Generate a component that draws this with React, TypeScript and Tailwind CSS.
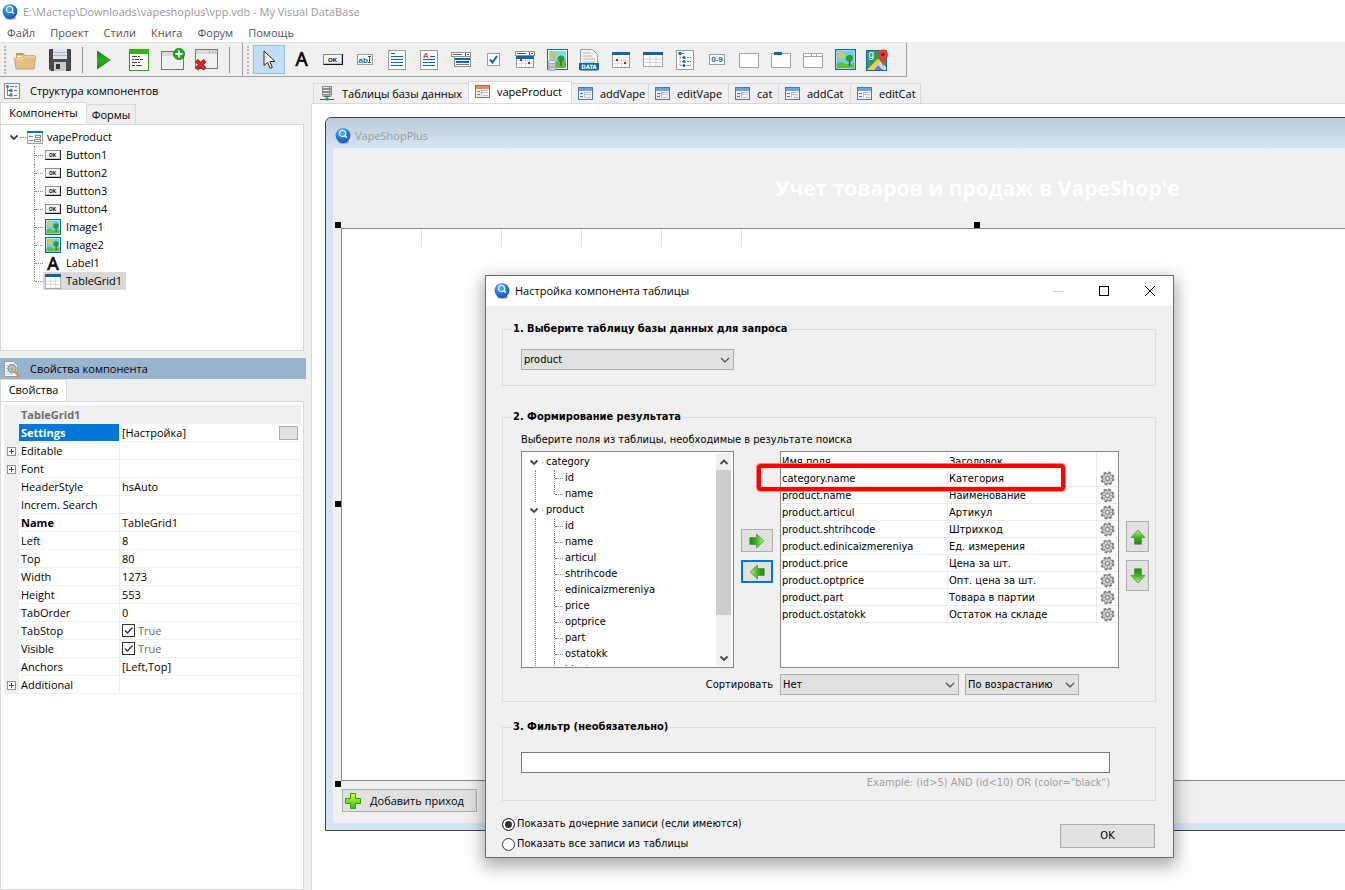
import type { ReactNode } from "react";

const inset = "col-start-1 row-start-1";

function AppIcon() {
  return (
    <svg width="16" height="16" viewBox="0 0 16 16" className="shrink-0">
      <defs>
        <radialGradient id="ball" cx="0.4" cy="0.3" r="0.75">
          <stop offset="0" stopColor="#6cbcf7" />
          <stop offset="0.6" stopColor="#1f74e0" />
          <stop offset="1" stopColor="#0f4d96" />
        </radialGradient>
      </defs>
      <ellipse cx="8.5" cy="14" rx="5.5" ry="1.800" fill="#9aa3ab" />
      <circle cx="8" cy="7.600" r="7.400" fill="url(#ball)" />
      <circle cx="7.600" cy="5.400" r="3.100" fill="#4aa0f0" stroke="#e8f4ff" strokeWidth="1.200" />
      <path d="M9.800 7.600 12 9.800" stroke="#e8f4ff" strokeWidth="1.400" />
    </svg>
  );
}

function FormIcon({ color, light }: { color: string; light: string }) {
  return (
    <svg width="15" height="13" viewBox="0 0 15 13" shapeRendering="crispEdges" className="shrink-0">
      <rect x="0.5" y="0.5" width="14" height="12" fill="#f4f4f4" stroke={color} />
      <rect x="1" y="1" width="13" height="3" fill={light} />
      <path d="M2 6.500h3M2 9.500h3" stroke={color} />
      <path d="M7 5.500h6M7 7.500h6M6 8.500h1M8 10.500h5M6.500 5v6" stroke="#bdbdbd" />
    </svg>
  );
}

function TreeFormIcon() {
  return (
    <svg width="16" height="13" viewBox="0 0 16 13" shapeRendering="crispEdges" className="shrink-0">
      <rect x="0.5" y="0.5" width="15" height="12" fill="#f2f2f2" stroke="#a0a0a0" />
      <rect width="16" height="2" fill="#0a79b8" />
      <path d="M2 5.500h4M2 9.500h4" stroke="#8a8a8a" />
      <path d="M8.500 4.500h5v2h-5zM7.500 8.500h6v2h-6z" fill="#fff" stroke="#8a8a8a" />
    </svg>
  );
}

function OkIcon({ w, h }: { w: number; h: number }) {
  return (
    <svg width={w} height={h} viewBox="0 0 20 11" preserveAspectRatio="none" className="shrink-0">
      <rect width="20" height="11" fill="#8a8a8a" />
      <path d="M20 0v11H0l1-1h18V0z" fill="#111" />
      <rect x="1" y="1" width="17.500" height="8.500" fill="#f3f3f3" />
      <text x="9.500" y="7.500" textAnchor="middle" fontSize="6" fontWeight="bold" fontFamily="Liberation Sans, sans-serif">OK</text>
    </svg>
  );
}

function PictureIcon({ size }: { size: number }) {
  return (
    <svg width={size} height={size} viewBox="0 0 16 16" className="shrink-0">
      <rect x="0.500" y="0.500" width="15" height="15" fill="#fff" stroke="#0b67b2" />
      <rect x="1.500" y="1.500" width="13" height="13" fill="#63d6f4" />
      <path d="M1.500 11q3-2 6 0t7-1v4.500h-13z" fill="#5bc035" />
      <circle cx="5" cy="5" r="2.400" fill="#fbc02d" />
      <circle cx="11" cy="7" r="2.700" fill="#2f9e2b" />
      <path d="M10.500 8.500h1.200V13h-1.200z" fill="#8a4b22" />
    </svg>
  );
}

function LetterA({ size }: { size: number }) {
  return (
    <svg width={size} height={size} viewBox="0 0 16 16" className="shrink-0 overflow-visible">
      <text x="8" y="14.500" textAnchor="middle" fontSize="18" stroke="#000" strokeWidth="0.600" fontFamily="Noto Sans, sans-serif">A</text>
    </svg>
  );
}

function GridIcon({ w, h }: { w: number; h: number }) {
  return (
    <svg width={w} height={h} viewBox="0 0 20 15" preserveAspectRatio="none" className="shrink-0">
      <rect x="0.500" y="0.500" width="19" height="14" fill="#fff" stroke="#a5a5a5" />
      <rect width="20" height="3" fill="#0a62ab" />
      <path d="M1 7h18M1 10.500h18M7 4v10M13 4v10" stroke="#d3d3d3" strokeWidth="0.900" />
    </svg>
  );
}

function StructureIcon() {
  return (
    <svg width="16" height="16" viewBox="0 0 16 16" className="shrink-0">
      <rect x="0.500" y="0.500" width="15" height="15" fill="#f7f7f7" stroke="#8d8d8d" />
      <path d="M3.500 4v8.500H7M3.500 7.500H7" fill="none" stroke="#777" />
      <circle cx="3.500" cy="3.500" r="1.500" fill="#3579b8" />
      <circle cx="7" cy="7.500" r="1.700" fill="#3579b8" />
      <circle cx="7" cy="12" r="1.700" fill="#3579b8" />
      <path d="M6 3.500h4M11 3.500h2M10 7.500h3M10 12.500h3" stroke="#777" />
    </svg>
  );
}

function InspectIcon() {
  return (
    <svg width="16" height="16" viewBox="0 0 16 16" className="shrink-0">
      <path d="M0.500 0.500h9l4 4v11h-13z" fill="#fafafa" stroke="#9b9b9b" />
      <path d="M2 4.500h2M2 7.500h2M2 10.500h2M2 13h7" stroke="#c0c0c0" />
      <circle cx="8" cy="7.500" r="4" fill="#8fd2ee" stroke="#8e979e" strokeWidth="1.400" />
      <path d="M6 8.500l2.500-3 1.500 2-2 2.500z" fill="#f29b38" />
      <path d="M11 10.500l3.500 4" stroke="#d79b47" strokeWidth="2.800" strokeLinecap="round" />
    </svg>
  );
}

function ServerIcon() {
  return (
    <svg width="14" height="15" viewBox="0 0 14 15" className="shrink-0">
      {[0, 3, 6].map((y) => (
        <g key={y}>
          <rect x="2" y={y} width="10" height="3" fill="#8a8a8a" />
          <path d={`M3 ${y + 1.5}h6`} stroke="#ececec" />
          <path d={`M10 ${y + 1.5}h1`} stroke="#d0f0d0" />
        </g>
      ))}
      <path d="M2 9.500h10L10 11H4zM6.500 11h1v2h-1z" fill="#666" />
      <path d="M0 13.500h14" stroke="#555" />
      <circle cx="7" cy="13" r="1.800" fill="#31ab31" />
    </svg>
  );
}

function Chevron({ up = false }: { up?: boolean }) {
  return (
    <svg width="10" height="10" viewBox="0 0 10 10" className="shrink-0">
      <path d={up ? "M1.500 7 5 3.500 8.500 7" : "M1.500 3.500 5 7 8.500 3.500"} fill="none" stroke="#444" strokeWidth="1.800" />
    </svg>
  );
}

function Gear() {
  return (
    <svg width="15" height="15" viewBox="0 0 15 15" className="mx-auto block">
      <circle cx="7.500" cy="7.500" r="6" fill="#d4d4d4" stroke="#7c7c7c" strokeWidth="2" strokeDasharray="2.700 2.012" />
      <circle cx="7.500" cy="7.500" r="5.200" fill="#d2d2d4" stroke="#8f8f8f" strokeWidth="0.900" />
      <path d="M7.500 2.500v10M2.500 7.500h10M4 4l7 7M11 4l-7 7" stroke="#9c9c9c" strokeWidth="0.800" />
      <circle cx="7.500" cy="7.500" r="2" fill="#f4f4f4" stroke="#777" />
    </svg>
  );
}

function Arrow({ dir }: { dir: "right" | "left" | "up" | "down" }) {
  const turn = { right: 0, down: 90, left: 180, up: 270 }[dir];
  return (
    <svg width="16" height="16" viewBox="0 0 16 16" className="mx-auto block">
      <defs>
        <linearGradient id={`green-${dir}`} x1="0" x2="1">
          <stop offset="0" stopColor="#138a10" />
          <stop offset="0.45" stopColor="#37b51f" />
          <stop offset="1" stopColor="#c6ef8c" />
        </linearGradient>
      </defs>
      <g transform={`rotate(${turn} 8 8)`}>
        <path d="M0.800 4.500H7.500V1L15 8l-7.500 7v-3.500H0.800z" fill={`url(#green-${dir})`} stroke="#5c8a50" strokeWidth="0.800" />
      </g>
    </svg>
  );
}

function FolderIcon() {
  return (
    <svg width="22" height="20" viewBox="0 0 22 20">
      <path d="M2 3h7l2 2h8v7H2z" fill="#c89a52" />
      <path d="M3 5.500h15V9H3z" fill="#f4f4f4" />
      <path d="M0.500 8h7l2-2h12l-1.500 13H2z" fill="#e3c08a" stroke="#c79d58" />
      <path d="M1 8.800h7l2-2h11" fill="none" stroke="#f6e0b4" />
    </svg>
  );
}

function SaveIcon() {
  return (
    <svg width="22" height="22" viewBox="0 0 22 22">
      <path d="M0.500 0.500h21v21H2l-1.500-1.500z" fill="#4a4a4e" stroke="#3a3a3d" />
      <rect x="4" y="0" width="14" height="10" fill="#dfe5ec" />
      <path d="M4 3.500h14M4 6.500h14" stroke="#a8b6c6" />
      <rect x="5" y="13" width="12" height="9" fill="#c9c9cc" />
      <rect x="7" y="15" width="4" height="5" fill="#333" />
    </svg>
  );
}

function RunIcon() {
  return (
    <svg width="14" height="20" viewBox="0 0 14 20">
      <defs>
        <linearGradient id="run" x2="0" y2="1">
          <stop offset="0" stopColor="#0a7a0c" />
          <stop offset="0.500" stopColor="#2fae2b" />
          <stop offset="1" stopColor="#138712" />
        </linearGradient>
      </defs>
      <path d="M0 0.500 14 10 0 19.500z" fill="url(#run)" />
    </svg>
  );
}

function ScriptIcon() {
  return (
    <svg width="20" height="22" viewBox="0 0 20 22" shapeRendering="crispEdges">
      <rect x="0.500" y="0.500" width="19" height="21" fill="#fff" stroke="#2ea112" />
      <rect width="20" height="5" fill="#37b018" />
      <path d="M3 7.500h5M9 7.500h2M3 10.500h2M6 10.500h4M11 10.500h3M3 13.500h5M9 13.500h2M3 16.500h3M7 16.500h6" stroke="#444" />
    </svg>
  );
}

function AddFormIcon() {
  return (
    <svg width="24" height="23" viewBox="0 0 24 23">
      <rect x="0.500" y="3.500" width="22" height="18" fill="#f0f0f0" stroke="#777" />
      <rect x="1" y="4" width="21" height="4" fill="#d9d9d9" />
      <circle cx="18" cy="6" r="5.700" fill="#2aa51c" stroke="#187a10" strokeWidth="0.600" />
      <path d="M18 2.500v7M14.500 6h7" stroke="#fff" strokeWidth="2" />
    </svg>
  );
}

function RemoveFormIcon() {
  return (
    <svg width="24" height="23" viewBox="0 0 24 23">
      <rect x="0.500" y="1.500" width="22" height="19" fill="#f0f0f0" stroke="#777" />
      <rect x="1" y="2" width="21" height="4" fill="#d9d9d9" />
      <path d="M14 4h1M17 4h1M20 4h1" stroke="#888" />
      <path d="M1.500 12.500l8.500 8.500M10 12.500L1.500 21" stroke="#8f1111" strokeWidth="4" />
      <path d="M1.500 12.500l8.500 8.500M10 12.500L1.500 21" stroke="#d92a22" strokeWidth="2.600" />
    </svg>
  );
}

function CursorIcon() {
  return (
    <svg width="13" height="20" viewBox="0 0 13 20">
      <path d="M1 1v14.500l3.500-3.200 2.600 6 2.300-1-2.600-5.800H12z" fill="#fff" stroke="#222" />
    </svg>
  );
}

function EditIcon() {
  return (
    <svg width="16" height="11" viewBox="0 0 16 11">
      <rect x="0.500" y="0.500" width="15" height="10" fill="#fff" stroke="#9b9b9b" />
      <text x="1.500" y="8.500" fontSize="8" fontWeight="bold" fill="#0b67b2" fontFamily="Liberation Sans, sans-serif">ab</text>
      <path d="M11 2.500h3M11 8.500h3M12.500 2.500v6" stroke="#555" />
    </svg>
  );
}

function MemoIcon({ rich = false }: { rich?: boolean }) {
  return (
    <svg width="18" height="20" viewBox="0 0 18 20" shapeRendering="crispEdges">
      <rect x="0.500" y="0.500" width="17" height="19" fill="#fff" stroke="#9b9b9b" />
      {rich ? (
        <>
          <text x="3" y="8" fontSize="8" fontWeight="bold" fill="#e2453a" fontFamily="Liberation Sans, sans-serif">A</text>
          <path d="M10 6.500h5M3 9.500h12M3 12.500h12M3 15.500h12" stroke="#0b67b2" />
        </>
      ) : (
        <path d="M3 3.500h4M3 6.500h12M3 9.500h12M3 12.500h12M3 15.500h12" stroke="#0b67b2" />
      )}
    </svg>
  );
}

function ComboIcon() {
  return (
    <svg width="20" height="15" viewBox="0 0 20 15" shapeRendering="crispEdges">
      <rect x="0.500" y="0.500" width="19" height="4" fill="#fff" stroke="#8f8f8f" />
      <path d="M2 2.500h9M14.500 1v3M16 2.500h2" stroke="#555" />
      <rect x="3.500" y="4.500" width="16" height="10" fill="#fff" stroke="#8f8f8f" />
      <path d="M5 12.500h13" stroke="#777" />
      <path d="M4 7h15M5 10h13" stroke="#0b67b2" strokeWidth="2" />
    </svg>
  );
}

function CheckIcon() {
  return (
    <svg width="13" height="13" viewBox="0 0 13 13">
      <rect x="0.500" y="0.500" width="12" height="12" fill="#fff" stroke="#9b9b9b" />
      <path d="M3 6.500l2.500 3L10 3" fill="none" stroke="#0b67b2" strokeWidth="2" />
    </svg>
  );
}

function CalendarIcon({ combo = false }: { combo?: boolean }) {
  return (
    <svg width="20" height="17" viewBox="0 0 20 17" shapeRendering="crispEdges">
      <rect x="1.500" y="1.500" width="17" height="15" fill="#fff" stroke="#9b9b9b" />
      <rect x="1" y={combo ? 5 : 1} width="18" height="3" fill="#0b67b2" />
      {combo && <path d="M0.500 0.500h19v4h-19z" fill="#fff" stroke="#8f8f8f" />}
      {combo && <path d="M2 2.500h9M14.500 1v3M16 2.500h2" stroke="#555" />}
      <path d="M3 9.500h14M3 12.500h14M6.500 8v8M10.500 8v8M14.500 8v8" stroke="#dcdcdc" />
      <path d="M5 8h2v2H5zM13 11h2v2h-2z" fill="#c01818" />
    </svg>
  );
}

function DbImageIcon() {
  return (
    <svg width="21" height="22" viewBox="0 0 21 22">
      <rect x="0.500" y="0.500" width="20" height="20" fill="#fff" stroke="#0b67b2" />
      <rect x="2" y="2" width="17" height="17" fill="#7adcf4" />
      <path d="M2 14q5-3 9-1t8-1v7H2z" fill="#5bc035" />
      <circle cx="6.500" cy="6.500" r="3" fill="#fbb62d" />
      <circle cx="14" cy="10" r="3.500" fill="#2f9e2b" />
      <path d="M13.300 12h1.500v5h-1.500z" fill="#8a4b22" />
      <path d="M1 13v7c0 2.500 8 2.500 8 0v-7z" fill="#c3cad2" stroke="#7e8890" strokeWidth="0.700" />
      <ellipse cx="5" cy="13" rx="4" ry="1.700" fill="#eef1f4" stroke="#7e8890" strokeWidth="0.700" />
      <path d="M1 16.500c0 2.200 8 2.200 8 0" fill="none" stroke="#7e8890" strokeWidth="0.700" />
    </svg>
  );
}

function DataIcon() {
  return (
    <svg width="20" height="22" viewBox="0 0 20 22">
      <path d="M1.500 0.500h12l5 5v16h-17z" fill="#f3f3f3" stroke="#9b9b9b" />
      <path d="M4 4h8M4 7h9M4 10h12M4 13h12" stroke="#c9c9c9" strokeWidth="1.400" />
      <rect y="14" width="20" height="7" fill="#0b67b2" />
      <text x="10" y="20" textAnchor="middle" fontSize="6" fontWeight="bold" fill="#fff" fontFamily="DejaVu Sans Condensed, sans-serif">DATA</text>
    </svg>
  );
}

function TreeIcon() {
  return (
    <svg width="18" height="20" viewBox="0 0 18 20">
      <rect x="0.500" y="0.500" width="17" height="19" fill="#fff" stroke="#9b9b9b" />
      <path d="M4 4v11M4 7.500h4M4 11.500h4M4 15.500h4" stroke="#999" strokeDasharray="1 1" />
      <path d="M6 3.500h3M11 7.500h4M11 11.500h4M11 15.500h4" stroke="#777" strokeDasharray="2 1" />
      <circle cx="4" cy="3.500" r="1.700" fill="#0b67b2" />
      <circle cx="8" cy="7.500" r="1.500" fill="#0b67b2" />
      <circle cx="8" cy="11.500" r="1.500" fill="#0b67b2" />
      <circle cx="8" cy="15.500" r="1.500" fill="#0b67b2" />
    </svg>
  );
}

function CounterIcon() {
  return (
    <svg width="16" height="11" viewBox="0 0 16 11">
      <rect x="0.500" y="0.500" width="15" height="10" fill="#fff" stroke="#9b9b9b" />
      <text x="8" y="8" textAnchor="middle" fontSize="8" fontWeight="bold" fill="#0b67b2" fontFamily="Liberation Sans, sans-serif">0-9</text>
    </svg>
  );
}

function PanelIcon({ kind }: { kind: "plain" | "group" | "tabs" }) {
  return (
    <svg width="20" height="16" viewBox="0 0 20 16" shapeRendering="crispEdges">
      <rect x="0.500" y="1.500" width="19" height="14" fill="#fff" stroke="#a5a5a5" />
      {kind === "group" && <rect x="3" y="0" width="8" height="3" fill="#0b67b2" />}
      {kind === "tabs" && <path d="M0 4.500h20M8.500 1v3M13.500 1v3" stroke="#a5a5a5" />}
    </svg>
  );
}

function MapIcon() {
  return (
    <svg width="23" height="22" viewBox="0 0 23 22">
      <rect x="0.500" y="1.500" width="20" height="20" fill="#2f9a5b" stroke="#0b67b2" />
      <path d="M1 21 12 10l8 8v3z" fill="#d9d9d9" />
      <path d="M1 21 12 10l2.500 2.500L6 21z" fill="#fbcf2f" />
      <path d="M12 16l5 5h-9z" fill="#4a86e8" />
      <text x="2.500" y="9" fontSize="10" fill="#fff" fontFamily="Liberation Sans, sans-serif">g</text>
      <path d="M17 0.500a5 5 0 0 1 5 5c0 4-4.300 6-5 12-.700-6-5-8-5-12a5 5 0 0 1 5-5z" fill="#e0412f" />
      <circle cx="17" cy="5.500" r="1.700" fill="#7a1b12" />
    </svg>
  );
}

function PlusIcon() {
  return (
    <svg width="16" height="16" viewBox="0 0 16 16" className="shrink-0">
      <defs>
        <linearGradient id="plus" x2="0" y2="1">
          <stop offset="0" stopColor="#f4f81a" />
          <stop offset="1" stopColor="#1fc21f" />
        </linearGradient>
      </defs>
      <path d="M5.500 0.500h5v5h5v5h-5v5h-5v-5h-5v-5h5z" fill="url(#plus)" stroke="#17a817" />
    </svg>
  );
}

function Tool({ label, active = false, children }: { label: string; active?: boolean; children: ReactNode }) {
  return (
    <button
      type="button"
      aria-label={label}
      className={
        active
          ? "flex h-[29px] w-8 items-center justify-center border border-[#90c0e8] bg-[#c3ddf3]"
          : "flex h-[29px] w-8 items-center justify-center"
      }
    >
      {children}
    </button>
  );
}

function Grip() {
  return <div className="h-7 w-0 border-l-2 border-dotted border-[#b8b8b8]" />;
}

const menu = ["Файл", "Проект", "Стили", "Книга", "Форум", "Помощь"];

const components: { name: string; icon: ReactNode }[] = [
  { name: "Button1", icon: <OkIcon w={16} h={10} /> },
  { name: "Button2", icon: <OkIcon w={16} h={10} /> },
  { name: "Button3", icon: <OkIcon w={16} h={10} /> },
  { name: "Button4", icon: <OkIcon w={16} h={10} /> },
  { name: "Image1", icon: <PictureIcon size={16} /> },
  { name: "Image2", icon: <PictureIcon size={16} /> },
  { name: "Label1", icon: <LetterA size={16} /> },
  { name: "TableGrid1", icon: <GridIcon w={16} h={15} /> },
];

const properties: { name: string; value?: string; expand?: boolean; check?: boolean; bold?: boolean }[] = [
  { name: "Settings", value: "[Настройка]" },
  { name: "Editable", expand: true },
  { name: "Font", expand: true },
  { name: "HeaderStyle", value: "hsAuto" },
  { name: "Increm. Search" },
  { name: "Name", value: "TableGrid1", bold: true },
  { name: "Left", value: "8" },
  { name: "Top", value: "80" },
  { name: "Width", value: "1273" },
  { name: "Height", value: "553" },
  { name: "TabOrder", value: "0" },
  { name: "TabStop", value: "True", check: true },
  { name: "Visible", value: "True", check: true },
  { name: "Anchors", value: "[Left,Top]" },
  { name: "Additional", expand: true },
];

const formTabs = [
  { name: "addVape", width: "w-[77px]" },
  { name: "editVape", width: "w-[80px]" },
  { name: "cat", width: "w-[50px]" },
  { name: "addCat", width: "w-[72px]" },
  { name: "editCat", width: "w-[70px]" },
];

const tables = [
  { name: "category", fields: ["id", "name"] },
  {
    name: "product",
    fields: ["id", "name", "articul", "shtrihcode", "edinicaizmereniya", "price", "optprice", "part", "ostatokk", "idcategory"],
  },
];

const columns = [
  ["category.name", "Категория"],
  ["product.name", "Наименование"],
  ["product.articul", "Артикул"],
  ["product.shtrihcode", "Штрихкод"],
  ["product.edinicaizmereniya", "Ед. измерения"],
  ["product.price", "Цена за шт."],
  ["product.optprice", "Опт. цена за шт."],
  ["product.part", "Товара в партии"],
  ["product.ostatokk", "Остаток на складе"],
];

function Toolbars() {
  return (
    <div className="flex">
      <div className="flex h-[35px] w-[243px] items-center border-t border-r border-b border-t-[#e3e3e3] border-r-[#a0a0a0] border-b-[#a0a0a0] pl-1">
        <Grip />
        <div className="flex flex-1 items-center pl-1.5">
          <button type="button" aria-label="Открыть" className="flex w-[25px] justify-center"><FolderIcon /></button>
          <button type="button" aria-label="Сохранить" className="ml-2.5 flex w-[25px] justify-center"><SaveIcon /></button>
          <div className="ml-2.5 h-[26px] w-px bg-[#8c8c8c]" />
          <button type="button" aria-label="Запустить" className="ml-3.5 flex"><RunIcon /></button>
          <button type="button" aria-label="Скрипт" className="ml-[18px] flex"><ScriptIcon /></button>
          <button type="button" aria-label="Новая форма" className="ml-3 flex"><AddFormIcon /></button>
          <button type="button" aria-label="Удалить форму" className="ml-2.5 flex"><RemoveFormIcon /></button>
          <div className="ml-2.5 h-[26px] w-px bg-[#8c8c8c]" />
        </div>
      </div>
      <div className="flex h-[35px] w-[664px] items-center border-t border-r border-b border-t-[#e3e3e3] border-r-[#a0a0a0] border-b-[#a0a0a0] pl-1">
        <Grip />
        <div className="flex pl-1">
          <Tool label="Выбор" active><CursorIcon /></Tool>
          <Tool label="Label"><LetterA size={17} /></Tool>
          <Tool label="Button"><OkIcon w={20} h={11} /></Tool>
          <Tool label="Edit"><EditIcon /></Tool>
          <Tool label="Memo"><MemoIcon /></Tool>
          <Tool label="RichEdit"><MemoIcon rich /></Tool>
          <Tool label="ComboBox"><ComboIcon /></Tool>
          <Tool label="CheckBox"><CheckIcon /></Tool>
          <Tool label="DateTimePicker"><CalendarIcon combo /></Tool>
          <Tool label="DBImage"><DbImageIcon /></Tool>
          <Tool label="DBFile"><DataIcon /></Tool>
          <Tool label="Calendar"><CalendarIcon /></Tool>
          <Tool label="TableGrid"><GridIcon w={20} h={15} /></Tool>
          <Tool label="TreeView"><TreeIcon /></Tool>
          <Tool label="Counter"><CounterIcon /></Tool>
          <Tool label="Panel"><PanelIcon kind="plain" /></Tool>
          <Tool label="GroupBox"><PanelIcon kind="group" /></Tool>
          <Tool label="PageControl"><PanelIcon kind="tabs" /></Tool>
          <Tool label="Image"><PictureIcon size={21} /></Tool>
          <Tool label="Map"><MapIcon /></Tool>
        </div>
      </div>
    </div>
  );
}

function ComponentTree() {
  return (
    <section>
      <h2 className="flex h-[25px] items-center gap-2.5 pt-0.5 pl-1">
        <StructureIcon />
        Структура компонентов
      </h2>
      <div className="flex h-[22px] items-end">
        <button type="button" className="h-[22px] w-[87px] border border-b-0 border-[#d9d9d9] bg-white pb-0.5">Компоненты</button>
        <button type="button" className="h-5 w-[49px] border border-b-0 border-l-0 border-[#d9d9d9]">Формы</button>
      </div>
      <div className="mr-0.5 h-[227px] border border-[#d9d9d9] bg-white pt-[3px]">
        <div className="flex h-[18px] items-center pl-2">
          <Chevron />
          <span className="mx-px w-1.5 border-t border-dotted border-[#888]" />
          <TreeFormIcon />
          <span className="ml-1">vapeProduct</span>
        </div>
        <ul>
          {components.map(({ name, icon }, i) => (
            <li key={name} className="flex h-[18px] pl-[33px]">
              <span
                className={
                  i === components.length - 1
                    ? "h-[9px] w-px border-l border-dotted border-[#888]"
                    : "h-[18px] w-px border-l border-dotted border-[#888]"
                }
              />
              <span className="mt-[9px] w-2 border-t border-dotted border-[#888]" />
              <span
                className={
                  name === "TableGrid1"
                    ? "flex items-center bg-[#d9d9d9] pr-1 pl-0.5"
                    : "flex items-center pr-1 pl-0.5"
                }
              >
                {icon}
                <span className="ml-[5px]">{name}</span>
              </span>
            </li>
          ))}
        </ul>
      </div>
    </section>
  );
}

function PropertyCheck({ name }: { name: string }) {
  return (
    <span className="grid h-[13px] w-[13px]">
      <input type="checkbox" id={name} defaultChecked className={`peer h-[13px] w-[13px] appearance-none border border-[#333] bg-white ${inset}`} />
      <svg viewBox="0 0 13 13" className={`pointer-events-none hidden peer-checked:block ${inset}`}>
        <path d="M3 6.500l2.500 2.500 5-5.500" fill="none" stroke="#333" strokeWidth="1.300" />
      </svg>
    </span>
  );
}

function Properties() {
  return (
    <section className="flex flex-1 flex-col pt-[7px]">
      <h2 className="flex h-[21px] items-center gap-2.5 bg-[#99b4d1] pl-1">
        <InspectIcon />
        Свойства компонента
      </h2>
      <div className="flex h-[22px]">
        <button type="button" className="w-[67px] border border-b-0 border-[#d9d9d9] bg-white pb-0.5">Свойства</button>
      </div>
      <div className="mr-0.5 flex-1 border border-[#d9d9d9] bg-white py-[3px] pr-0.5 pl-[3px]">
        <table className="w-full table-fixed border-separate border-spacing-0">
          <colgroup>
            <col className="w-[15px]" />
            <col className="w-[101px]" />
            <col />
          </colgroup>
          <thead>
            <tr className="h-[19px] bg-[#f0f0f0] text-left text-[#6d6d6d]">
              <td />
              <th colSpan={2} className="p-0 pl-0.5">TableGrid1</th>
            </tr>
          </thead>
          <tbody>
            {properties.map(({ name, value, expand, check, bold }) => (
              <tr key={name} className="h-[18px] leading-[17px]">
                <td className="bg-[#f0f0f0] p-0">
                  {expand && (
                    <button type="button" aria-label={name} className="mx-auto block">
                      <svg width="9" height="9" viewBox="0 0 9 9" shapeRendering="crispEdges">
                        <rect x="0.500" y="0.500" width="8" height="8" fill="#fff" stroke="#919191" />
                        <path d="M2 4.500h5M4.500 2v5" stroke="#2b4f9e" />
                      </svg>
                    </button>
                  )}
                </td>
                <th
                  className={
                    name === "Settings"
                      ? "border-r border-b border-[#f0f0f0] bg-[#0078d7] bg-clip-padding p-0 pl-0.5 text-left font-bold text-white"
                      : bold
                        ? "border-r border-b border-[#f0f0f0] p-0 pl-0.5 text-left font-bold"
                        : "border-r border-b border-[#f0f0f0] p-0 pl-0.5 text-left font-normal"
                  }
                >
                  {name}
                </th>
                <td className="border-b border-[#f0f0f0] p-0 pl-0.5">
                  {check ? (
                    <label htmlFor={name} className="flex items-center gap-[3px] text-[#6d6d6d]">
                      <PropertyCheck name={name} />
                      {value}
                    </label>
                  ) : (
                    <span className="flex items-center justify-between pr-[3px]">
                      {value}
                      {name === "Settings" && (
                        <button type="button" aria-label="Настройка" className="h-3.5 w-[19px] border border-[#adadad] bg-[#e1e1e1]" />
                      )}
                    </span>
                  )}
                </td>
              </tr>
            ))}
          </tbody>
        </table>
      </div>
    </section>
  );
}

function FormDesigner() {
  return (
    <main className="flex min-w-0 flex-1 flex-col pt-1 pl-[5px]">
      <div className="flex h-[22px] items-end pl-0.5">
        <button type="button" className="flex h-5 w-[155px] items-center gap-2 border border-r-0 border-b-0 border-[#d9d9d9] pl-1.5 whitespace-nowrap">
          <ServerIcon />
          Таблицы базы данных
        </button>
        <button type="button" className="flex h-[22px] w-[104px] items-center gap-[7px] border border-b-0 border-[#d9d9d9] bg-white pb-0.5 pl-1.5">
          <FormIcon color="#c5603c" light="#f08a62" />
          vapeProduct
        </button>
        {formTabs.map(({ name, width }) => (
          <button key={name} type="button" className={`flex h-5 items-center gap-[7px] border border-b-0 border-l-0 border-[#d9d9d9] pl-1.5 ${width}`}>
            <FormIcon color="#4c74b5" light="#6fa0e0" />
            {name}
          </button>
        ))}
      </div>
      <div className="flex-1 overflow-hidden border-t border-l border-[#d9d9d9] bg-white pt-[13px] pl-[13px]">
        {/* the edited form is wider than the workspace and runs under its right edge */}
        <div className="w-[1305px] rounded-t-md border border-[#404048] bg-[#d7e4f2] px-[7px] pb-[7px]">
          <div className="-mx-[7px] flex h-[30px] items-center gap-1 rounded-t-md bg-gradient-to-b from-[#bccad9] to-[#d7e4f2] pt-1.5 pl-[9px] text-[#999]">
            <AppIcon />
            VapeShopPlus
          </div>
          <div className="bg-[#f0f0f0] px-2 pb-[11px]">
            <h1 className="flex h-20 items-center justify-center text-[21px] font-bold text-white">
              Учет товаров и продаж в VapeShop'e
            </h1>
            <div className="relative h-[553px] border border-[#828790] bg-white">
              <div className="flex">
                {[0, 1, 2, 3, 4].map((i) => (
                  <div key={i} className="h-[18px] w-20 border-r border-[#e2e2e2]" />
                ))}
              </div>
              <i className="absolute -top-[7px] -left-[7px] size-1.5 bg-black" />
              <i className="absolute -top-[7px] left-1/2 -ml-1 size-1.5 bg-black" />
              <i className="absolute top-1/2 -left-[7px] -mt-1 size-1.5 bg-black" />
              <i className="absolute -bottom-[7px] -left-[7px] size-1.5 bg-black" />
            </div>
            <button type="button" className="mt-2 ml-px flex h-[23px] w-[135px] items-center gap-[9px] border border-[#adadad] bg-[#e1e1e1] pl-0.5">
              <PlusIcon />
              Добавить приход
            </button>
          </div>
        </div>
      </div>
    </main>
  );
}

function Select({ label, width, value }: { label: string; width: string; value: string }) {
  return (
    <span className={`grid h-[21px] ${width}`}>
      <select aria-label={label} className={`appearance-none border border-[#adadad] bg-[#e1e1e1] pt-px pl-0.5 ${inset}`}>
        <option>{value}</option>
      </select>
      <svg width="10" height="10" viewBox="0 0 10 10" className={`pointer-events-none mr-1 self-center justify-self-end ${inset}`}>
        <path d="M1 3l4 4 4-4" fill="none" stroke="#444" strokeWidth="1.100" />
      </svg>
    </span>
  );
}

function FieldTree() {
  return (
    <div className="flex h-[217px] w-[213px] border border-[#828790] bg-white p-px pr-0.5">
      <div className="h-[213px] flex-1 overflow-hidden pt-px">
        {tables.map(({ name, fields }) => (
          <div key={name}>
            <div className="flex h-4 items-center pl-1.5">
              <Chevron />
              <span className="mx-[3px] h-px w-px bg-[#888]" />
              {name}
            </div>
            <ul className="ml-3 border-l border-dotted border-[#888] pl-[18px]">
              {fields.map((field, i) => (
                <li key={field} className="flex h-4">
                  <span
                    className={
                      name === "category" && i === fields.length - 1
                        ? "h-2 border-l border-dotted border-[#888]"
                        : "h-4 border-l border-dotted border-[#888]"
                    }
                  />
                  <span className="mt-2 w-2 border-t border-dotted border-[#888]" />
                  <span className="ml-0.5 leading-4">{field}</span>
                </li>
              ))}
            </ul>
          </div>
        ))}
      </div>
      <div className="flex w-[15px] flex-col bg-[#f0f0f0]">
        <button type="button" aria-label="Вверх" className="flex h-[17px] items-center justify-center"><Chevron up /></button>
        <div className="h-[145px] bg-[#cdcdcd]" />
        <button type="button" aria-label="Вниз" className="mt-auto flex h-[17px] items-center justify-center"><Chevron /></button>
      </div>
    </div>
  );
}

function ResultTable() {
  return (
    <div className="relative h-[217px] w-[339px] border border-[#828790] bg-white">
      <table className="w-full table-fixed border-separate border-spacing-0 leading-[15px]">
        <colgroup>
          <col className="w-[167px]" />
          <col className="w-[149px]" />
          <col className="w-[21px]" />
        </colgroup>
        <thead>
          <tr className="h-[18px] text-left">
            <th className="border-r border-[#e8e8e8] p-0 pl-px font-normal">Имя поля</th>
            <th className="border-r border-[#e8e8e8] p-0 pl-px font-normal">Заголовок</th>
            <td />
          </tr>
        </thead>
        <tbody>
          {columns.map(([field, title]) => (
            <tr key={field} className="h-[17px]">
              <td className="border-r border-b border-[#ececec] p-0 pl-px">{field}</td>
              <td className="border-r border-b border-[#ececec] p-0 pl-px">{title}</td>
              <td className="border-b border-[#ececec] p-0">
                <button type="button" aria-label={`Параметры ${field}`} className="mx-auto block"><Gear /></button>
              </td>
            </tr>
          ))}
        </tbody>
      </table>
      <div className="pointer-events-none absolute top-3 -left-6 h-[27px] w-[308px] rounded-[3px] border-4 border-[#ff0000] outline outline-[#ff8080]" />
    </div>
  );
}

const moveButton = "border border-[#adadad] bg-[#e1e1e1]";

function SettingsDialog() {
  return (
    <div
      role="dialog"
      aria-label="Настройка компонента таблицы"
      className="absolute top-[275px] left-[485px] w-[689px] border border-[#6b6b6b] bg-[#f0f0f0] font-['DejaVu_Sans_Condensed','DejaVu_Sans',sans-serif] shadow-[0_6px_16px_2px_rgba(0,0,0,0.35)]"
    >
      <div className="flex h-[30px] items-center bg-white pl-2 font-['Open_Sans',sans-serif]">
        <AppIcon />
        <h2 className="ml-[5px] flex-1">Настройка компонента таблицы</h2>
        <button type="button" aria-label="Свернуть" className="flex w-[46px] justify-center">
          <svg width="10" height="10" viewBox="0 0 10 10" shapeRendering="crispEdges"><path d="M0 5.500h10" stroke="#ccc" /></svg>
        </button>
        <button type="button" aria-label="Развернуть" className="flex w-[46px] justify-center">
          <svg width="10" height="10" viewBox="0 0 10 10" shapeRendering="crispEdges"><path d="M0.500 0.500h9v9h-9z" fill="none" stroke="#000" /></svg>
        </button>
        <button type="button" aria-label="Закрыть" className="flex w-[46px] justify-center">
          <svg width="10" height="10" viewBox="0 0 10 10"><path d="M0 0l10 10M10 0L0 10" stroke="#000" /></svg>
        </button>
      </div>
      <form className="pt-4 pr-[17px] pb-[3px] pl-4">
        <fieldset className="h-16 border border-[#dcdcdc] pt-[13px] pl-[18px]">
          <legend className="-ml-2.5 px-0.5 leading-[14px] font-bold">1. Выберите таблицу базы данных для запроса</legend>
          <Select label="Таблица" width="w-[213px]" value="product" />
        </fieldset>

        <fieldset className="mt-6 border border-[#dcdcdc] pt-[9px] pb-1.5 pl-[18px]">
          <legend className="-ml-2.5 px-0.5 leading-[14px] font-bold">2. Формирование результата</legend>
          <p className="leading-[14px]">Выберите поля из таблицы, необходимые в результате поиска</p>
          <div className="mt-1 flex gap-[7px]">
            <FieldTree />
            <div className="mt-[78px] flex w-8 flex-col gap-2">
              <button type="button" aria-label="Добавить поле" className={`h-[23px] ${moveButton}`}><Arrow dir="right" /></button>
              <button type="button" aria-label="Убрать поле" className="h-[23px] border-2 border-[#0078d7] bg-[#e1e1e1]"><Arrow dir="left" /></button>
            </div>
            <ResultTable />
            <div className="mt-[70px] flex w-[23px] flex-col gap-2">
              <button type="button" aria-label="Выше" className={`h-[31px] ${moveButton}`}><Arrow dir="up" /></button>
              <button type="button" aria-label="Ниже" className={`h-[31px] ${moveButton}`}><Arrow dir="down" /></button>
            </div>
          </div>
          <div className="mt-1.5 flex items-center">
            <span className="w-[252px] text-right">Сортировать</span>
            <div className="ml-[7px] flex gap-1.5">
              <Select label="Сортировать" width="w-[179px]" value="Нет" />
              <Select label="Порядок" width="w-[114px]" value="По возрастанию" />
            </div>
          </div>
        </fieldset>

        <fieldset className="mt-[18px] h-[81px] border border-[#dcdcdc] pt-[18px] pl-[18px]">
          <legend className="-ml-2.5 px-0.5 leading-[14px] font-bold">3. Фильтр (необязательно)</legend>
          <input aria-label="Фильтр" type="text" className="block h-[21px] w-[589px] border border-[#7a7a7a] bg-white px-1" />
          <p className="w-[589px] pt-0.5 text-right text-[#a0a0a0]">Example: (id&gt;5) AND (id&lt;10) OR (color="black")</p>
        </fieldset>

        <div className="mt-[13px] flex items-end justify-between">
          <div>
            {["Показать дочерние записи (если имеются)", "Показать все записи из таблицы"].map((text, i) => (
              <label key={text} className="flex h-5 items-center gap-0.5">
                <input
                  type="radio"
                  name="scope"
                  defaultChecked={i === 0}
                  className="size-[13px] appearance-none rounded-full border border-[#333] bg-white checked:bg-[#333] checked:shadow-[inset_0_0_0_2px_white]"
                />
                {text}
              </label>
            ))}
          </div>
          <button type="button" className="mr-px mb-1.5 h-6 w-[95px] border border-[#adadad] bg-[#e1e1e1]">OK</button>
        </div>
      </form>
    </div>
  );
}

export default function App() {
  return (
    <div className="relative flex min-h-screen flex-col overflow-hidden bg-[#f0f0f0] font-['Open_Sans','Noto_Sans',sans-serif] text-[11px] leading-4 text-black">
      <header className="bg-white">
        <div className="flex h-6 items-center gap-[5px] pl-0.5 text-[#999]">
          <AppIcon />
          E:\Мастер\Downloads\vapeshoplus\vpp.vdb - My Visual DataBase
        </div>
        <nav className="flex h-[18px] items-center gap-[15px] pl-[7px] text-[#555]">
          {menu.map((item) => (
            <a key={item} href="#">{item}</a>
          ))}
        </nav>
      </header>
      <Toolbars />
      <div className="flex flex-1">
        <aside className="flex w-[306px] shrink-0 flex-col">
          <ComponentTree />
          <Properties />
        </aside>
        <FormDesigner />
      </div>
      <SettingsDialog />
    </div>
  );
}
